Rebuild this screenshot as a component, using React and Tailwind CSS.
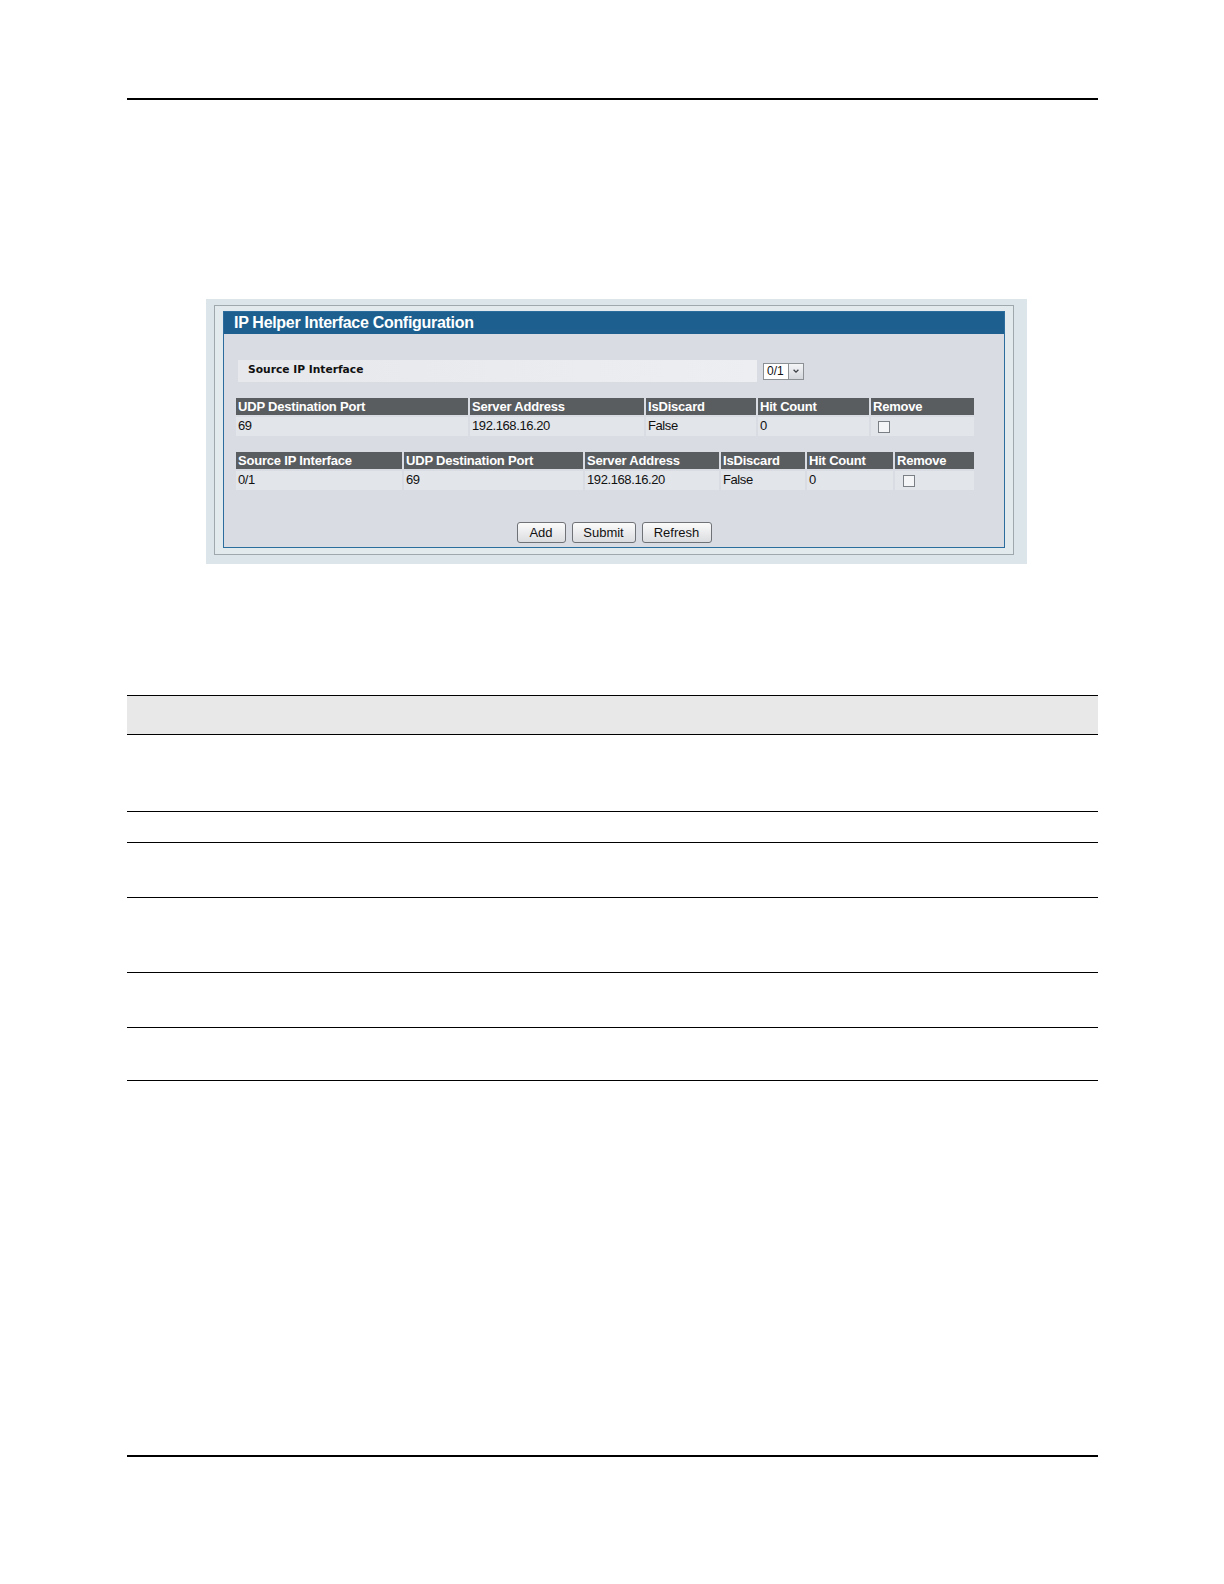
function Check({ offset = 5 }) {
  return (
    <span
      className="mt-[4px] block h-[12px] w-[12px] border border-[#7a7f86] bg-[#f4f5f7]"
      style={{ marginLeft: offset }}
    />
  );
}

function DataTable({ cols }) {
  return (
    <div className="flex flex-col gap-[2px]">
      <div className="flex gap-[2px]">
        {cols.map((c) => (
          <div
            key={c.head}
            className="h-[17px] bg-[#5a5d60] pl-[2px] text-[13px] font-bold leading-[17px] tracking-[-0.2px] text-white"
            style={{ width: c.w }}
          >
            {c.head}
          </div>
        ))}
      </div>
      <div className="flex gap-[2px]">
        {cols.map((c) => (
          <div
            key={c.head}
            className="h-[19px] bg-[#e2e5ea] pl-[2px] text-[13px] leading-[18px] tracking-[-0.4px] text-[#111]"
            style={{ width: c.w }}
          >
            {c.check ? <Check offset={c.off} /> : c.val}
          </div>
        ))}
      </div>
    </div>
  );
}

function Btn({ w, children }) {
  return (
    <button
      type="button"
      className="h-[21px] rounded-[3px] border border-[#6f7378] bg-gradient-to-b from-[#fbfbfb] to-[#dcdde0] text-[13px] leading-[19px] text-[#111]"
      style={{ width: w }}
    >
      {children}
    </button>
  );
}

const table1 = [
  { head: 'UDP Destination Port', w: 232, val: '69' },
  { head: 'Server Address', w: 174, val: '192.168.16.20' },
  { head: 'IsDiscard', w: 110, val: 'False' },
  { head: 'Hit Count', w: 111, val: '0' },
  { head: 'Remove', w: 103, check: true, off: 5 },
];

const table2 = [
  { head: 'Source IP Interface', w: 166, val: '0/1' },
  { head: 'UDP Destination Port', w: 179, val: '69' },
  { head: 'Server Address', w: 134, val: '192.168.16.20' },
  { head: 'IsDiscard', w: 84, val: 'False' },
  { head: 'Hit Count', w: 86, val: '0' },
  { head: 'Remove', w: 79, check: true, off: 6 },
];

const rowHeights = [77, 31, 55, 75, 55, 53];

export default function App() {
  return (
    <div className="min-h-[1584px] w-[1224px] bg-white font-['Liberation_Sans',Arial,sans-serif]">
      <div className="pt-[98px]">
        <div className="ml-[127px] h-[2px] w-[971px] bg-black" />
      </div>

      {/* screenshot frame */}
      <div className="ml-[206px] mt-[199px] h-[265px] w-[821px] bg-[#dce6ea] pl-[8px] pt-[6px]">
        <div className="h-[250px] w-[800px] border border-[#9fa8ad] bg-[#e3eaed] px-[8px] pt-[5px]">
          <div className="flex h-[237px] w-[782px] flex-col border border-[#2b6e9e] bg-[#d9dde3]">
            <div className="h-[22px] bg-[#1d6090] pl-[10px] text-[16px] font-bold leading-[22px] tracking-[-0.3px] text-white">
              IP Helper Interface Configuration
            </div>

            <div className="ml-[14px] mt-[26px] flex items-center">
              <div className="h-[22px] w-[519px] bg-gradient-to-r from-[#e6e8ec] to-[#eceef1] pl-[10px] font-['DejaVu_Sans',Verdana,sans-serif] text-[10.7px] font-bold leading-[20px] text-[#111]">
                Source IP Interface
              </div>
              <div className="ml-[6px] flex h-[17px] items-center">
                <div className="h-[17px] w-[26px] border border-[#8c9196] bg-white pl-[3px] text-[12px] leading-[15px] text-[#111]">
                  0/1
                </div>
                <div className="flex h-[17px] w-[15px] items-center justify-center border border-l-0 border-[#8c9196] bg-gradient-to-b from-[#f4f5f7] to-[#d4d7dc]">
                  <svg viewBox="0 0 10 10" className="h-[8px] w-[8px]">
                    <path d="M2 3.5L5 6.5L8 3.5" fill="none" stroke="#3c4046" strokeWidth="1.6" />
                  </svg>
                </div>
              </div>
            </div>

            <div className="ml-[12px] mt-[16px]">
              <DataTable cols={table1} />
            </div>
            <div className="ml-[12px] mt-[16px]">
              <DataTable cols={table2} />
            </div>

            <div className="mt-[32px] flex justify-center gap-[6px]">
              <Btn w={49}>Add</Btn>
              <Btn w={64}>Submit</Btn>
              <Btn w={70}>Refresh</Btn>
            </div>
          </div>
        </div>
      </div>

      {/* lower table */}
      <div className="ml-[127px] mt-[131px] w-[971px]">
        <div className="h-[40px] border-y-[1.5px] border-black bg-[#e8e8e8]" />
        {rowHeights.map((h, i) => (
          <div key={i} className="border-b-[1.5px] border-black" style={{ height: h }} />
        ))}
      </div>

      <div className="ml-[127px] mt-[374px] h-[2px] w-[971px] bg-black" />
    </div>
  );
}
